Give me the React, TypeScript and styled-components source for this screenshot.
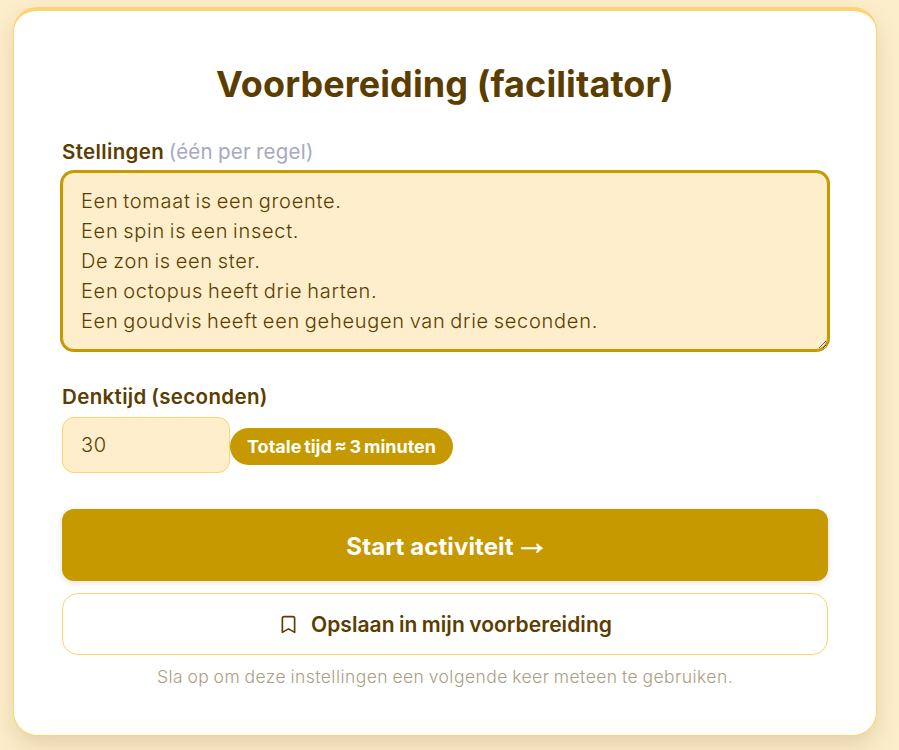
import styled, { createGlobalStyle } from 'styled-components';
import { Bookmark } from 'lucide-react';

const STATEMENTS = [
  'Een tomaat is een groente.',
  'Een spin is een insect.',
  'De zon is een ster.',
  'Een octopus heeft drie harten.',
  'Een goudvis heeft een geheugen van drie seconden.',
].join('\n');

const GlobalStyle = createGlobalStyle`
  html, body {
    margin: 0;
    height: 100%;
    overflow: hidden;
    background: #fdeecb;
  }

  body, textarea, input, button {
    font-family: Inter, 'Noto Sans', sans-serif;
  }
`;

const Page = styled.main`
  padding: 7px 22px 14px 13px;
`;

const Card = styled.section`
  box-sizing: border-box;
  height: 729px;
  padding: 50px 48px 0;
  background: #fff;
  border: 1px solid #ffd371;
  border-top-width: 4px;
  border-radius: 24px;
  box-shadow: 0 10px 24px rgba(92, 61, 0, 0.16);
`;

const Title = styled.h1`
  margin: 0 0 32px;
  color: #5c3d00;
  font-size: 36px;
  line-height: 46px;
  font-weight: 700;
  letter-spacing: 0.1px;
  text-align: center;
`;

const Label = styled.label`
  display: block;
  margin-bottom: 7px;
  color: #5c3d00;
  font-size: 20.5px;
  line-height: 26px;
  font-weight: 560;
  letter-spacing: 0.35px;
  word-spacing: -1px;
`;

const Hint = styled.span`
  color: #a7a9bd;
  font-weight: 400;
  letter-spacing: 0.25px;
`;

const Statements = styled.textarea`
  display: block;
  box-sizing: border-box;
  width: 100%;
  height: 178px;
  margin-bottom: 34px;
  padding: 13px 18px;
  color: #5c3d00;
  background: #feeecb;
  border: 1px solid #c69900;
  outline: none;
  box-shadow: 0 0 0 2px #c69900;
  border-radius: 12px;
  font-size: 20px;
  font-weight: 350;
  line-height: 30px;
  letter-spacing: 0.72px;
  word-spacing: -1.5px;
  resize: vertical;
`;

const TimeRow = styled.div`
  display: flex;
  align-items: center;
  margin-bottom: 36px;
`;

const TimeInput = styled.input`
  box-sizing: border-box;
  width: 168px;
  height: 56px;
  padding: 0 18px;
  color: #5c3d00;
  background: #feeecb;
  border: 1px solid #ffd371;
  border-radius: 12px;
  font-size: 20px;
  font-weight: 350;
  letter-spacing: 0.6px;
`;

const Badge = styled.span`
  display: inline-flex;
  align-items: center;
  height: 37px;
  margin-top: 2px;
  padding: 0 17px;
  color: #fff;
  background: #c69900;
  border-radius: 999px;
  font-size: 18px;
  font-weight: 700;
  word-spacing: -1.5px;
`;

const StartButton = styled.button`
  display: flex;
  align-items: center;
  justify-content: center;
  gap: 1px;
  width: 100%;
  height: 72px;
  margin-bottom: 12px;
  padding: 2px 0 0 6px;
  color: #fff;
  background: #c69900;
  border: 0;
  border-radius: 12px;
  box-shadow: 0 2px 6px rgba(92, 61, 0, 0.15);
  font-size: 24px;
  font-weight: 700;
  letter-spacing: 0.1px;
`;

const Arrow = styled.span`
  margin-bottom: 10px;
  font-family: 'Liberation Sans', sans-serif;
  font-size: 35px;
  line-height: 1;
  -webkit-text-stroke: 0.6px #fff;
`;

const SaveButton = styled.button`
  display: flex;
  align-items: center;
  justify-content: center;
  gap: 12px;
  box-sizing: border-box;
  width: 100%;
  height: 62px;
  margin-bottom: 10px;
  color: #5c3d00;
  background: #fff;
  border: 1px solid #ffd371;
  border-radius: 16px;
  font-size: 21px;
  font-weight: 570;
  letter-spacing: 0.06px;
  word-spacing: -1px;
`;

const Note = styled.p`
  margin: 0;
  color: #ad9d82;
  font-size: 17.5px;
  font-weight: 350;
  line-height: 23px;
  letter-spacing: 0.45px;
  word-spacing: -1px;
  text-align: center;
`;

const App = () => (
  <Page>
    <GlobalStyle />
    <Card>
      <Title>Voorbereiding (facilitator)</Title>
      <Label htmlFor='statements'>
        Stellingen <Hint>(één per regel)</Hint>
      </Label>
      <Statements id='statements' defaultValue={STATEMENTS} />
      <Label htmlFor='think-time'>Denktijd (seconden)</Label>
      <TimeRow>
        <TimeInput id='think-time' type='number' defaultValue={30} />
        <Badge>Totale tijd ≈ 3 minuten</Badge>
      </TimeRow>
      <StartButton type='button'>
        Start activiteit <Arrow>→</Arrow>
      </StartButton>
      <SaveButton type='button'>
        <Bookmark size={21} strokeWidth={1.9} />
        Opslaan in mijn voorbereiding
      </SaveButton>
      <Note>Sla op om deze instellingen een volgende keer meteen te gebruiken.</Note>
    </Card>
  </Page>
);

export default App;
